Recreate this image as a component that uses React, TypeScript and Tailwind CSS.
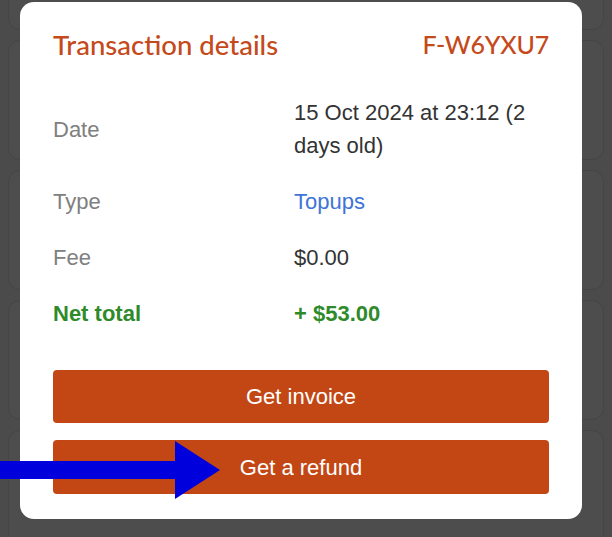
export default function App() {
  const rows = [
    { label: "Date", value: "15 Oct 2024 at 23:12 (2 days old)", tone: "text-[#333333]" },
    { label: "Type", value: "Topups", tone: "text-[#3d74d6]" },
    { label: "Fee", value: "$0.00", tone: "text-[#333333]" },
  ];

  return (
    <div className="relative w-[612px] h-[537px] overflow-hidden bg-[#4b4b4b] font-['Liberation_Sans',Arial,sans-serif]">
      {/* dimmed page behind the modal */}
      <div className="flex flex-col gap-[10px] px-[8px] -mt-[70px]">
        {[100, 120, 120, 120, 120].map((h, i) => (
          <div key={i} style={{ height: h }} className="rounded-xl border border-[#454545] bg-[#4d4d4d]" />
        ))}
      </div>

      <div className="absolute left-[20px] top-[2px] w-[562px] h-[517px] rounded-[14px] bg-white px-[33px] pt-[25px] pb-[25px] flex flex-col">
        <div className="flex items-center justify-between h-[36px] font-['Lato',sans-serif] font-medium text-[#c54a1b]">
          <h2 className="text-[27.5px]">Transaction details</h2>
          <span className="text-[25px] tracking-[-0.2px]">F-W6YXU7</span>
        </div>

        <div className="mt-[33px] grid grid-cols-[241px_1fr] gap-y-[23px] items-center text-[22px] leading-[33px]">
          {rows.map((r) => (
            <div key={r.label} className="contents">
              <div className="text-[#808080]">{r.label}</div>
              <div className={r.tone}>{r.value}</div>
            </div>
          ))}
          <div className="font-bold text-[#2f8a2a]">Net total</div>
          <div className="font-bold text-[#2f8a2a]">+ $53.00</div>
        </div>

        <div className="mt-auto flex flex-col gap-[17px]">
          <button className="h-[53px] rounded-[4px] bg-[#c34714] text-white text-[22px]">Get invoice</button>
          <button className="h-[54px] rounded-[4px] bg-[#c34714] text-white text-[22px]">Get a refund</button>
        </div>
      </div>

      {/* annotation arrow */}
      <svg className="absolute left-0 top-0" width="612" height="537" viewBox="0 0 612 537">
        <rect x="0" y="461" width="176" height="18" fill="#0000dd" />
        <polygon points="175,441 175,499 220,470" fill="#0000dd" />
      </svg>
    </div>
  );
}
